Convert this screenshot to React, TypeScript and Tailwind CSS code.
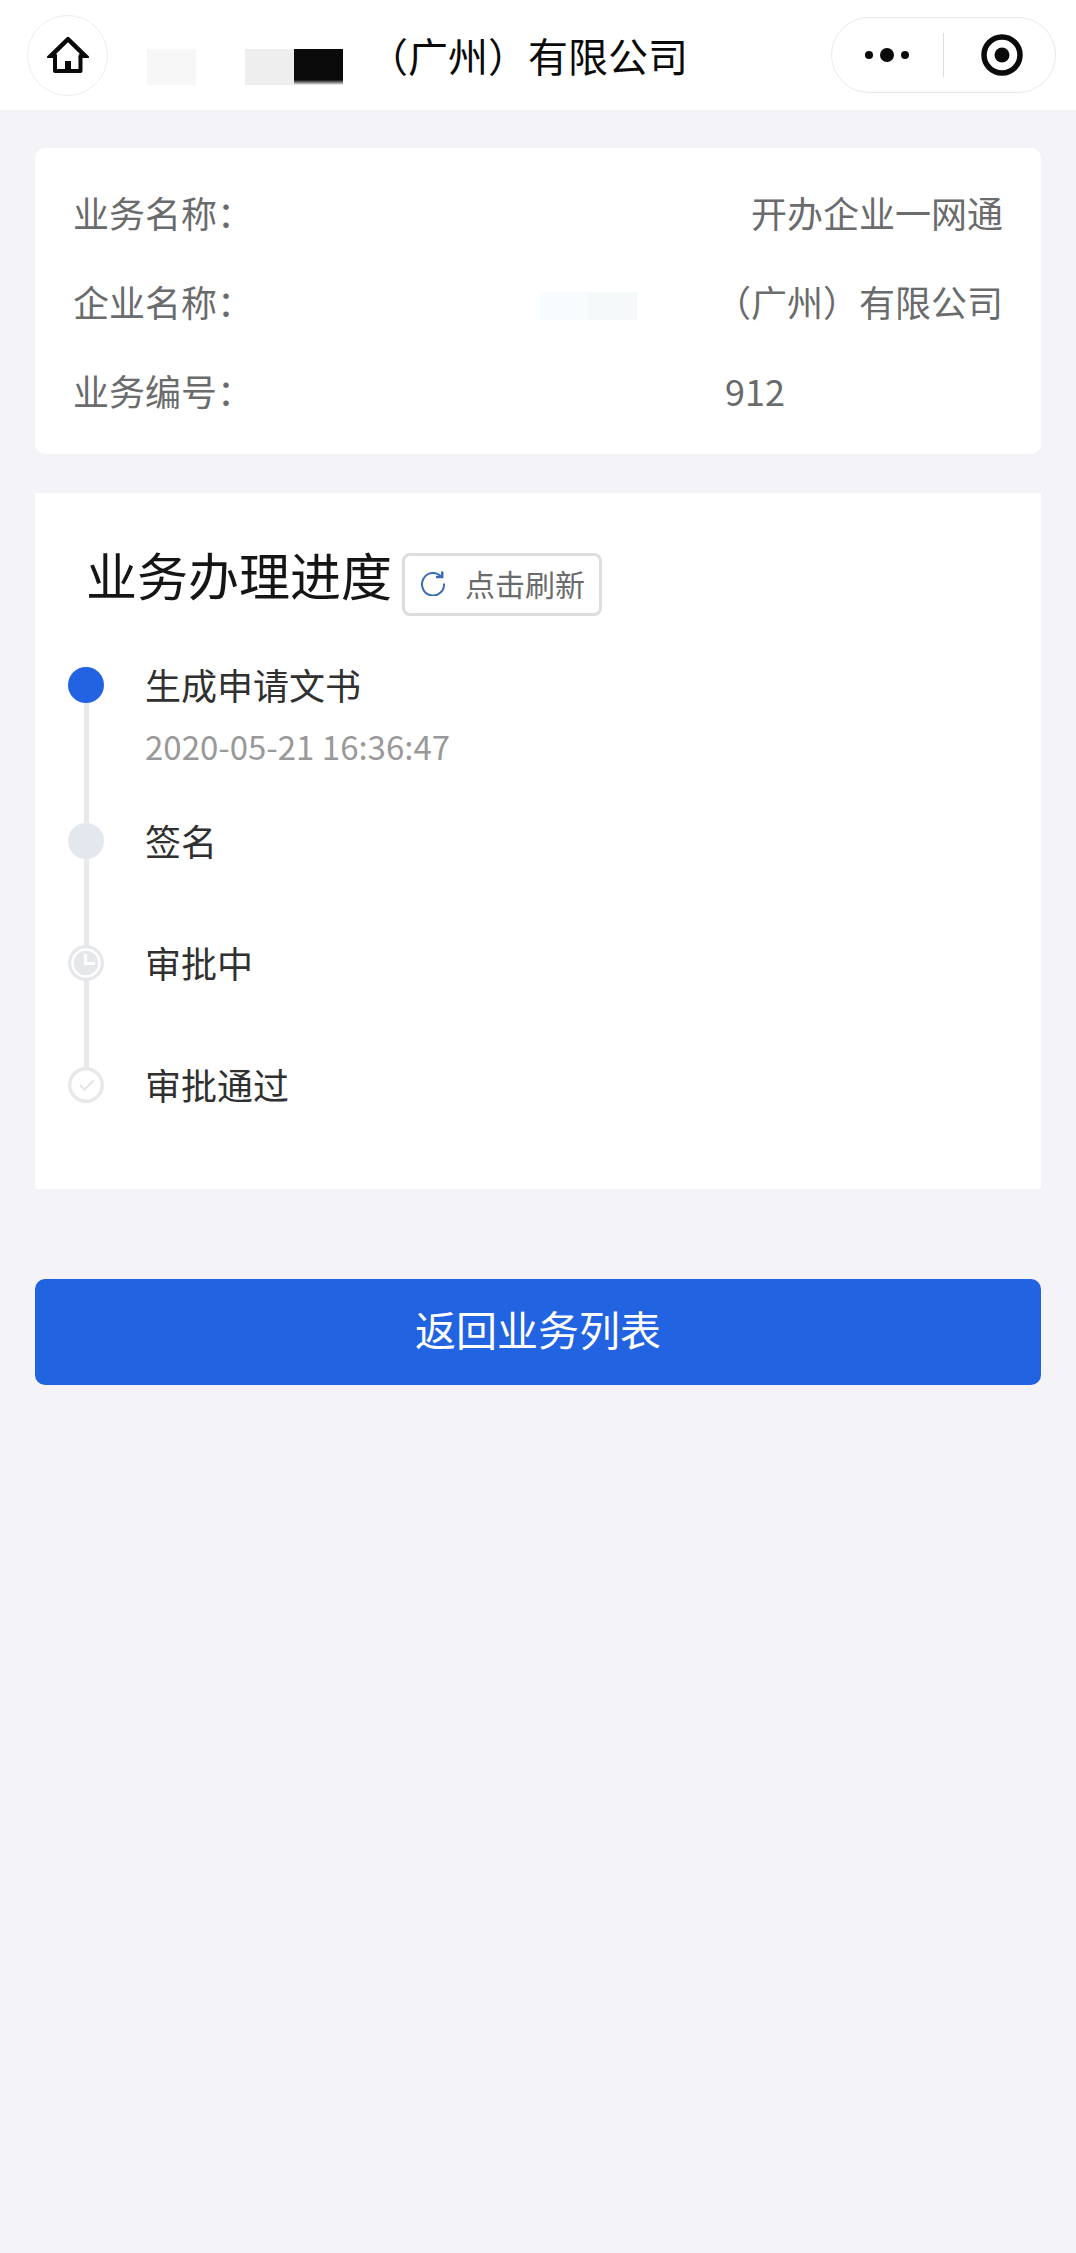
import React from "react";

type StepKind = "active" | "pending" | "clock" | "check";

const details = [
  { label: "业务名称：", value: "开办企业一网通" },
  { label: "企业名称：", value: "（广州）有限公司", masked: "name" },
  { label: "业务编号：", value: "912", masked: "number" },
];

const steps: { title: string; time?: string; kind: StepKind }[] = [
  { title: "生成申请文书", time: "2020-05-21 16:36:47", kind: "active" },
  { title: "签名", kind: "pending" },
  { title: "审批中", kind: "clock" },
  { title: "审批通过", kind: "check" },
];

function HomeIcon() {
  return (
    <svg width="42" height="38" viewBox="0 0 42 38" fill="none" aria-hidden="true">
      <path d="M8 20v15h25.500V20" stroke="#0a0a0a" strokeWidth="4" strokeLinejoin="round" />
      <path d="M0 20.600 19.800 1.200q1.200-1 2.400 0L42 20.600q.3 1.400-1.200 1.400H31.700v-3.800h1.500L21 6.200 8.800 18.200h1.200V22H1.200Q-.3 22 0 20.600z" fill="#0a0a0a" />
      <path d="M18 25h6v11h-6z" fill="#0a0a0a" />
    </svg>
  );
}

function RefreshIcon() {
  return (
    <svg width="24" height="26" viewBox="0 0 24 26" fill="none" stroke="#3a6bb8" strokeWidth="2" aria-hidden="true">
      <path d="M20 6.500A11 11.300 0 1 0 23 13.500" />
      <path d="M21.200 1.500V7H15" strokeWidth="2.500" />
    </svg>
  );
}

function StepMarker({ kind }: { kind: StepKind }) {
  return (
    <svg className="size-9 shrink-0" viewBox="0 0 36 36" fill="none" aria-hidden="true">
      {kind === "active" && <circle cx="18" cy="18" r="18" fill="#2263e2" />}
      {kind === "pending" && <circle cx="18" cy="18" r="18" fill="#e5e7ee" />}
      {kind === "clock" && (
        <>
          <circle cx="18" cy="18" r="18" fill="#e5e7eb" />
          <circle cx="18" cy="18" r="13.500" stroke="#fff" strokeWidth="2.500" />
          <path d="M17.500 9v9.500H27" stroke="#fff" strokeWidth="3" />
        </>
      )}
      {kind === "check" && (
        <>
          <circle cx="18" cy="18" r="16.300" fill="#fff" stroke="#e7e8ea" strokeWidth="3.400" />
          <path d="m12 18 4.500 4.500 9-9" stroke="#e3e5e7" strokeWidth="2" />
        </>
      )}
    </svg>
  );
}

export default function App() {
  return (
    <div className="min-h-screen bg-[#f4f4f8] font-['Noto_Sans_CJK_SC',sans-serif]" lang="zh-CN">
      <header className="flex h-[110px] items-center bg-white pr-5 pl-[27px]">
        <button
          type="button"
          aria-label="首页"
          className="flex size-[81px] items-center justify-center rounded-full border border-[#ececec]"
        >
          <HomeIcon />
        </button>
        <div className="mt-6 ml-[39px] flex h-9" aria-hidden="true">
          <div className="w-[49px] bg-[#f7f7f7]" />
          <div className="ml-[49px] w-[49px] bg-[#eeeeee]" />
          <div className="w-[49px] bg-linear-to-b from-[#0a0a0a] from-85% to-white" />
        </div>
        <h1 className="ml-[25px] text-[40px] leading-[60px] whitespace-nowrap text-[#0a0a0a]">
          （广州）有限公司
        </h1>
        <div className="ml-auto flex h-[76px] w-[225px] items-center rounded-full border border-[#e9e9e9]">
          <button type="button" aria-label="更多" className="flex h-full w-[111px] items-center justify-center">
            <svg width="46" height="16" viewBox="0 0 46 16" fill="#0a0a0a" aria-hidden="true">
              <circle cx="4" cy="8" r="4" />
              <circle cx="22" cy="8" r="7" />
              <circle cx="40" cy="8" r="4" />
            </svg>
          </button>
          <div className="h-11 w-px bg-[#dddddd]" />
          <button type="button" aria-label="关闭" className="flex h-full flex-1 items-center justify-center pl-1">
            <svg width="42" height="42" viewBox="0 0 42 42" fill="none" aria-hidden="true">
              <circle cx="21" cy="21" r="18" stroke="#0a0a0a" strokeWidth="5.500" />
              <circle cx="21" cy="21" r="7.500" fill="#0a0a0a" />
            </svg>
          </button>
        </div>
      </header>

      <main className="px-[35px] pt-[38px]">
        <dl className="rounded-[10px] bg-white px-[38px] pt-5 pb-[19px] text-[36px] leading-[89px] text-[#6a6b6c]">
          {details.map((item) => (
            <div key={item.label} className="flex items-center justify-between">
              <dt>{item.label}</dt>
              <dd className="flex items-center">
                {item.masked === "name" && (
                  <span className="mt-2 mr-[78px] flex h-7" aria-hidden="true">
                    <span className="w-[49px] bg-[#f7fcfe]" />
                    <span className="w-[49px] bg-[#f6f9fa]" />
                  </span>
                )}
                {item.value}
                {item.masked === "number" && <span className="w-[218px]" aria-hidden="true" />}
              </dd>
            </div>
          ))}
        </dl>

        <section className="mt-[39px] bg-white px-[33px] pt-[60px] pb-[86px]">
          <div className="flex items-start pl-[18px]">
            <h2 className="text-[51px] leading-[42px] text-[#151515]">业务办理进度</h2>
            <button
              type="button"
              className="ml-[10px] flex h-[63px] items-center rounded-lg border-[3px] border-[#dddddd] pr-[14px] pb-1 pl-4 text-[30px] leading-9 text-[#6a6b6c]"
            >
              <RefreshIcon />
              <span className="ml-5">点击刷新</span>
            </button>
          </div>

          <ol className="mt-[51px]">
            {steps.map((step, index) => (
              <li key={step.title} className="flex">
                <div className="flex flex-col items-center">
                  <StepMarker kind={step.kind} />
                  {index < steps.length - 1 && <div className="w-[5px] flex-1 bg-[#e7e9ea]" />}
                </div>
                <div className={index < steps.length - 1 ? "ml-[41px] pb-[88px]" : "ml-[41px]"}>
                  <h3 className="text-[36px] leading-[34px] text-[#303030]">{step.title}</h3>
                  {step.time && (
                    <time className="mt-7 -mb-7 block text-[33px] leading-[34px] text-[#999999]">{step.time}</time>
                  )}
                </div>
              </li>
            ))}
          </ol>
        </section>

        <button
          type="button"
          className="mt-[90px] h-[106px] w-full rounded-[10px] bg-[#2263e2] pb-2 text-[41px] leading-[60px] text-white"
        >
          返回业务列表
        </button>
      </main>
    </div>
  );
}
